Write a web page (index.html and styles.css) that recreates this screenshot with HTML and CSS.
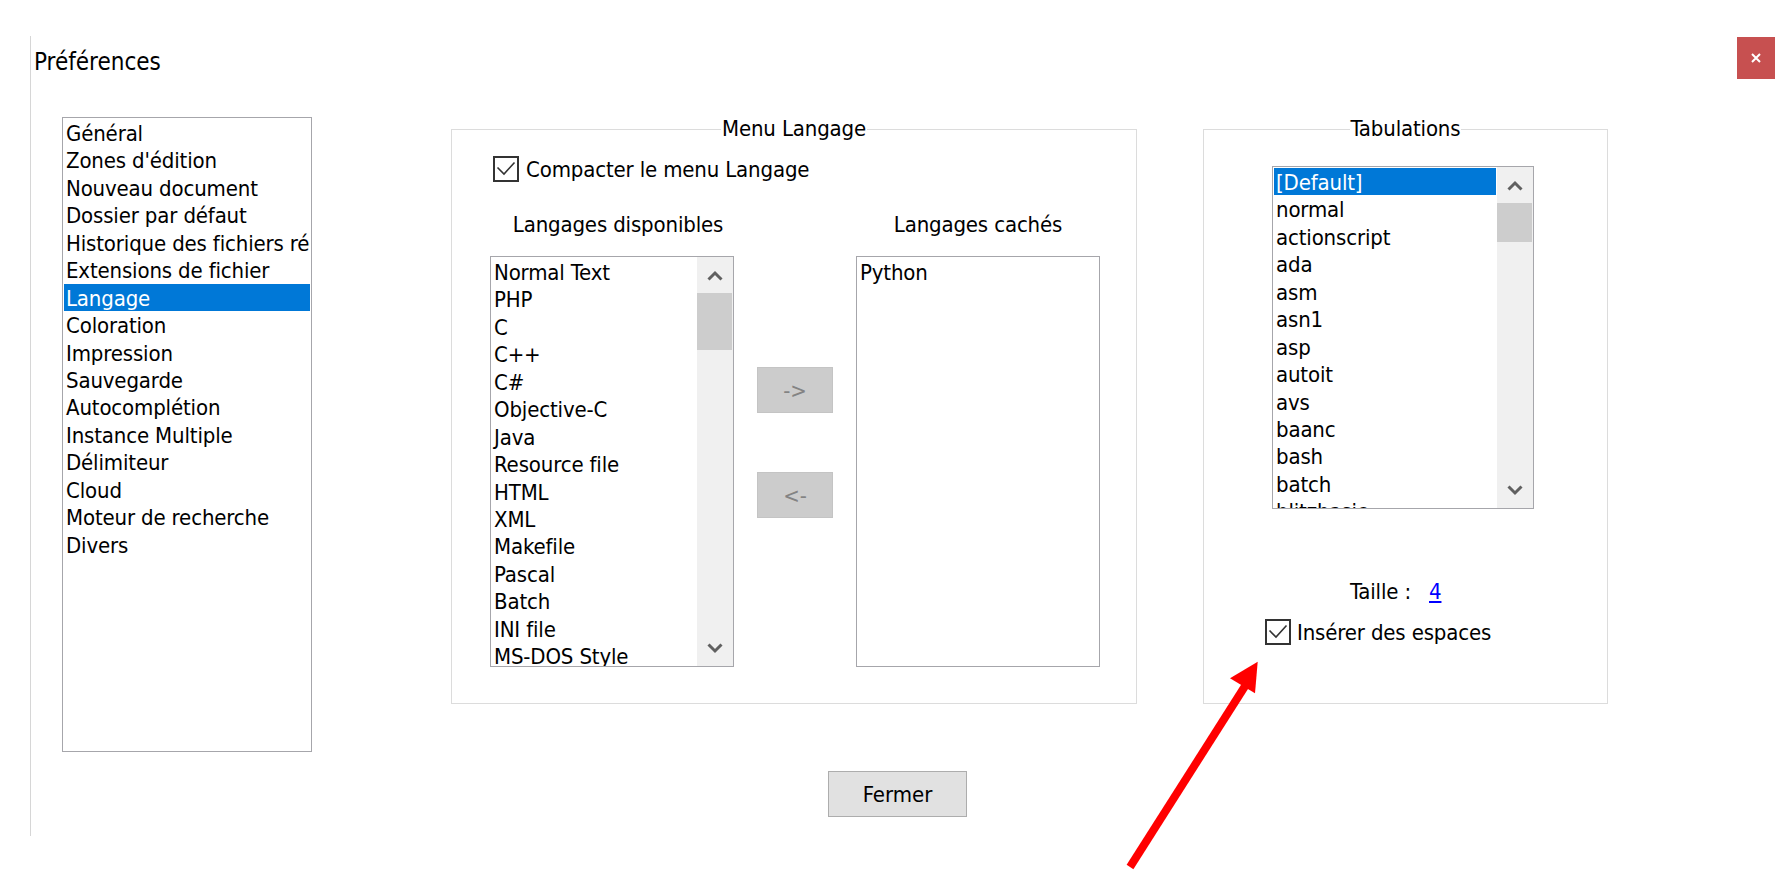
FILE: index.html
```html
<!DOCTYPE html>
<html lang="fr">
<head>
<meta charset="utf-8">
<title>Préférences</title>
<link rel="stylesheet" href="styles.css">
</head>
<body>
<div class="window">
  <div class="titlebar">
    <div class="title">Préférences</div>
    <button class="close" aria-label="Fermer">
      <svg width="10" height="10" viewBox="0 0 10 10"><path d="M1 1 L9 9 M9 1 L1 9" stroke="#fff" stroke-width="2" fill="none"/></svg>
    </button>
  </div>
  <div class="content">
    <div class="listbox nav">
      <div class="items">
        <div class="item">Général</div>
        <div class="item">Zones d'édition</div>
        <div class="item">Nouveau document</div>
        <div class="item">Dossier par défaut</div>
        <div class="item">Historique des fichiers récents</div>
        <div class="item">Extensions de fichier</div>
        <div class="item selected">Langage</div>
        <div class="item">Coloration</div>
        <div class="item">Impression</div>
        <div class="item">Sauvegarde</div>
        <div class="item">Autocomplétion</div>
        <div class="item">Instance Multiple</div>
        <div class="item">Délimiteur</div>
        <div class="item">Cloud</div>
        <div class="item">Moteur de recherche</div>
        <div class="item">Divers</div>
      </div>
    </div>
    <div class="main">
      <div class="groups">
        <fieldset class="group group-lang">
          <legend>Menu Langage</legend>
          <label class="check check-compact">
            <svg class="box" width="26" height="26" viewBox="0 0 26 26"><rect x="1" y="1" width="24" height="24" fill="#fff" stroke="#333" stroke-width="2"/><path d="M4.5 11.5 L11 18 L21.5 6.5" fill="none" stroke="#333" stroke-width="1.6"/></svg>
            <span>Compacter le menu Langage</span>
          </label>
          <div class="lang-grid">
            <div class="col-label col-label-left">Langages disponibles</div>
            <div></div>
            <div class="col-label">Langages cachés</div>
            <div class="listbox lang-list">
              <div class="items">
                <div class="item">Normal Text</div>
                <div class="item">PHP</div>
                <div class="item">C</div>
                <div class="item">C++</div>
                <div class="item">C#</div>
                <div class="item">Objective-C</div>
                <div class="item">Java</div>
                <div class="item">Resource file</div>
                <div class="item">HTML</div>
                <div class="item">XML</div>
                <div class="item">Makefile</div>
                <div class="item">Pascal</div>
                <div class="item">Batch</div>
                <div class="item">INI file</div>
                <div class="item">MS-DOS Style</div>
                <div class="item">ASP</div>
              </div>
              <div class="scrollbar">
                <div class="sb-btn"><svg width="16" height="11" viewBox="0 0 16 11"><path d="M1.5 9.5 L8 3 L14.5 9.5" fill="none" stroke="#606060" stroke-width="3"/></svg></div>
                <div class="sb-track"><div class="sb-thumb thumb-lang"></div></div>
                <div class="sb-btn"><svg width="16" height="11" viewBox="0 0 16 11"><path d="M1.5 1.5 L8 8 L14.5 1.5" fill="none" stroke="#606060" stroke-width="3"/></svg></div>
              </div>
            </div>
            <div class="move-btns">
              <button class="move">-&gt;</button>
              <button class="move">&lt;-</button>
            </div>
            <div class="listbox lang-list">
              <div class="items">
                <div class="item">Python</div>
              </div>
            </div>
          </div>
        </fieldset>
        <fieldset class="group group-tab">
          <legend>Tabulations</legend>
          <div class="listbox tab-list">
            <div class="items">
              <div class="item selected">[Default]</div>
              <div class="item">normal</div>
              <div class="item">actionscript</div>
              <div class="item">ada</div>
              <div class="item">asm</div>
              <div class="item">asn1</div>
              <div class="item">asp</div>
              <div class="item">autoit</div>
              <div class="item">avs</div>
              <div class="item">baanc</div>
              <div class="item">bash</div>
              <div class="item">batch</div>
              <div class="item">blitzbasic</div>
            </div>
            <div class="scrollbar">
              <div class="sb-btn"><svg width="16" height="11" viewBox="0 0 16 11"><path d="M1.5 9.5 L8 3 L14.5 9.5" fill="none" stroke="#606060" stroke-width="3"/></svg></div>
              <div class="sb-track"><div class="sb-thumb thumb-tab"></div></div>
              <div class="sb-btn"><svg width="16" height="11" viewBox="0 0 16 11"><path d="M1.5 1.5 L8 8 L14.5 1.5" fill="none" stroke="#606060" stroke-width="3"/></svg></div>
            </div>
          </div>
          <div class="size-row">
            <span>Taille :</span>
            <a class="size-link" href="#">4</a>
          </div>
          <label class="check check-spaces">
            <svg class="box" width="26" height="26" viewBox="0 0 26 26"><rect x="1" y="1" width="24" height="24" fill="#fff" stroke="#333" stroke-width="2"/><path d="M4.5 11.5 L11 18 L21.5 6.5" fill="none" stroke="#333" stroke-width="1.6"/></svg>
            <span>Insérer des espaces</span>
          </label>
        </fieldset>
      </div>
      <button class="fermer">Fermer</button>
    </div>
  </div>
  <svg class="arrow" width="160" height="224" viewBox="0 0 160 224">
    <line x1="20" y1="217" x2="137" y2="33" stroke="#ff0000" stroke-width="8"/>
    <polygon points="147.7,11.7 120,28.3 145,43.3" fill="#ff0000"/>
  </svg>
</div>
</body>
</html>
```
FILE: styles.css
```css
html, body {
  margin: 0;
  padding: 0;
  background: #ffffff;
}

body {
  font-family: "DejaVu Sans Condensed", "DejaVu Sans", sans-serif;
  font-stretch: semi-condensed;
  font-size: 22px;
  letter-spacing: -0.15px;
  color: #000;
  width: 1789px;
  height: 874px;
  overflow: hidden;
}

.window {
  position: relative;
  margin: 36px 0 0 30px;
  border-left: 1px solid #d6d6d6;
  height: 800px;
}

.titlebar {
  display: flex;
  justify-content: space-between;
  align-items: flex-start;
  height: 43px;
}

.title {
  font-size: 24px;
  letter-spacing: 0;
  line-height: 28px;
  padding: 12px 0 0 3px;
}

.close {
  margin: 1px 14px 0 0;
  width: 38px;
  height: 42px;
  border: 0;
  padding: 0;
  background: #c75050;
  display: flex;
  align-items: center;
  justify-content: center;
}

.content {
  display: flex;
  align-items: flex-start;
  margin-top: 38px;
  padding-left: 31px;
}

/* list boxes */
.listbox {
  box-sizing: border-box;
  border: 1px solid #a6a6ab;
  background: #fff;
  display: flex;
  overflow: hidden;
}

.items {
  flex: 1;
  min-width: 0;
  padding: 1px;
  overflow: hidden;
}

.item {
  box-sizing: border-box;
  height: 27.45px;
  padding: 3px 0 0 2px;
  line-height: 24.45px;
  white-space: nowrap;
  overflow: hidden;
}

.item.selected {
  background: #0078d7;
  color: #fff;
}

.nav {
  width: 250px;
  height: 635px;
}

.scrollbar {
  width: 36px;
  flex: none;
  background: #f0f0f0;
  display: flex;
  flex-direction: column;
}

.sb-btn {
  height: 36px;
  flex: none;
  display: flex;
  align-items: center;
  justify-content: center;
}

.sb-track {
  flex: 1;
}

.sb-thumb {
  background: #cdcdcd;
  margin: 0 1px 0 0;
}

.thumb-lang { height: 57px; }
.thumb-tab { height: 39px; }

/* main area */
.main {
  margin-left: 139px;
  display: flex;
  flex-direction: column;
  align-items: flex-start;
}

.groups {
  display: flex;
  align-items: flex-start;
  gap: 66px;
}

.group {
  box-sizing: border-box;
  margin: 0;
  padding: 0;
  border: 1px solid #dcdcdc;
  min-width: 0;
  height: 587px;
}

.group legend {
  margin: 0 auto;
  padding: 0 1px;
  line-height: 24px;
}

.group-lang {
  width: 686px;
}

.group-tab {
  width: 405px;
}

.check {
  display: flex;
  align-items: flex-start;
  gap: 7px;
  line-height: 28px;
}

.check .box {
  flex: none;
}

.check-compact {
  margin: 15px 0 0 41px;
}

.lang-grid {
  display: grid;
  grid-template-columns: 244px 76px 244px;
  column-gap: 23px;
  row-gap: 17px;
  margin: 27px 0 0 38px;
}

.col-label {
  text-align: center;
  line-height: 28px;
}

.col-label-left {
  padding-left: 12px;
}

.lang-list {
  height: 411px;
}

.move-btns {
  display: flex;
  flex-direction: column;
  gap: 59px;
  padding-top: 111px;
}

.move {
  width: 76px;
  height: 46px;
  padding: 0;
  background: #cccccc;
  border: 1px solid #c4c4c4;
  color: #838383;
  font: inherit;
}

.tab-list {
  width: 262px;
  height: 343px;
  margin: 25px 0 0 68px;
}

.size-row {
  display: flex;
  gap: 18px;
  line-height: 28px;
  margin: 69px 0 0 146px;
}

.size-link {
  color: #0000ff;
  text-decoration: underline;
}

.check-spaces {
  margin: 13px 0 0 61px;
  gap: 6px;
}

.fermer {
  margin: 67px 0 0 377px;
  width: 139px;
  height: 46px;
  padding: 0;
  background: #e1e1e1;
  border: 1px solid #adadad;
  font: inherit;
  color: #000;
}

.arrow {
  position: absolute;
  left: 1079px;
  top: 614px;
}
```
